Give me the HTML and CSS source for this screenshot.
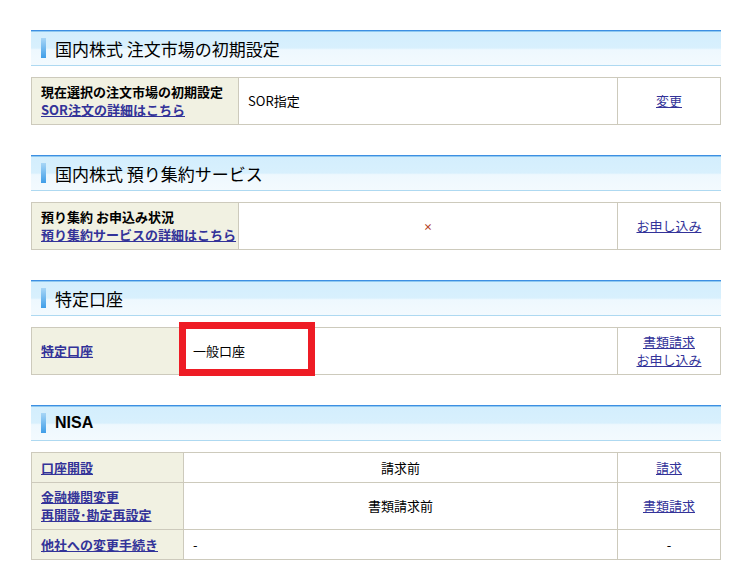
FILE: index.html
```html
<!DOCTYPE html>
<html lang="ja">
<head>
  <meta charset="UTF-8">
  <title>口座設定</title>
  <link rel="stylesheet" href="styles.css">
</head>
<body>
  <div class="wrap">

    <!-- 注文市場 -->
    <div class="section">
      <h2 class="sec-title"><span class="bar"></span>国内株式 注文市場の初期設定</h2>
      <table class="grid">
        <colgroup><col class="c-wide"><col><col class="c-act"></colgroup>
        <tr>
          <th>現在選択の注文市場の初期設定<br><a href="#">SOR注文の詳細はこちら</a></th>
          <td>SOR指定</td>
          <td class="act"><a href="#">変更</a></td>
        </tr>
      </table>
    </div>

    <!-- 預り集約 -->
    <div class="section">
      <h2 class="sec-title"><span class="bar"></span>国内株式 預り集約サービス</h2>
      <table class="grid">
        <colgroup><col class="c-wide"><col><col class="c-act"></colgroup>
        <tr>
          <th>預り集約 お申込み状況<br><a href="#">預り集約サービスの詳細はこちら</a></th>
          <td class="center"><span class="cross">×</span></td>
          <td class="act"><a href="#">お申し込み</a></td>
        </tr>
      </table>
    </div>

    <!-- 特定口座 -->
    <div class="section">
      <h2 class="sec-title"><span class="bar"></span>特定口座</h2>
      <div class="marked">
        <table class="grid">
          <colgroup><col class="c-narrow"><col><col class="c-act"></colgroup>
          <tr>
            <th><a href="#">特定口座</a></th>
            <td>一般口座</td>
            <td class="act"><a href="#">書類請求</a><br><a href="#">お申し込み</a></td>
          </tr>
        </table>
        <div class="highlight"></div>
      </div>
    </div>

    <!-- NISA -->
    <div class="section">
      <h2 class="sec-title latin"><span class="bar"></span>NISA</h2>
      <table class="grid">
        <colgroup><col class="c-narrow"><col><col class="c-act"></colgroup>
        <tr class="one">
          <th><a href="#">口座開設</a></th>
          <td class="center">請求前</td>
          <td class="act"><a href="#">請求</a></td>
        </tr>
        <tr>
          <th><a href="#">金融機関変更</a><br><a href="#">再開設･勘定再設定</a></th>
          <td class="center">書類請求前</td>
          <td class="act"><a href="#">書類請求</a></td>
        </tr>
        <tr class="one">
          <th><a href="#">他社への変更手続き</a></th>
          <td>-</td>
          <td class="act">-</td>
        </tr>
      </table>
    </div>

  </div>
</body>
</html>
```

FILE: styles.css
```css
body {
  margin: 0;
  background: #fff;
  font-family: "Noto Sans CJK JP", "Liberation Sans", sans-serif;
  font-size: 13px;
  color: #000;
}

.wrap {
  width: 690px;
  padding: 30px 0 0 31px;
}

.section {
  margin-bottom: 30px;
}

.sec-title {
  display: flex;
  align-items: center;
  height: 34px;
  margin: 0 0 11px;
  padding-left: 10px;
  font-size: 17px;
  font-weight: normal;
  color: #000;
  border-top: 1px solid #3d8fe2;
  border-bottom: 1px solid #aed9f1;
  box-shadow: inset 0 1px 0 #8fc9f1;
  background: linear-gradient(#d3eefd 0%, #d8f0fd 50%, #eef8fe 55%, #f3fafe 100%);
}

.sec-title.latin {
  font-family: "Liberation Sans", sans-serif;
  font-size: 16px;
  font-weight: bold;
}

.bar {
  display: inline-block;
  width: 5px;
  height: 20px;
  margin-right: 9px;
  background: linear-gradient(#a8d6f6, #3f9ee8);
}

.grid {
  width: 690px;
  border-collapse: collapse;
  table-layout: fixed;
}

.c-wide { width: 207px; }
.c-narrow { width: 152px; }
.c-act { width: 103px; }

.grid th,
.grid td {
  border: 1px solid #cdcabc;
  padding: 5px 9px;
  line-height: 18px;
  text-align: left;
  vertical-align: middle;
  font-weight: normal;
}

.grid .one th,
.grid .one td {
  padding-top: 6px;
}

.grid th {
  padding-right: 2px;
  background: #f1f1e2;
  font-weight: bold;
  white-space: nowrap;
}

.grid td.center,
.grid td.act {
  text-align: center;
}

.grid a {
  color: #333399;
}

.cross {
  font-size: 9px;
  font-weight: bold;
  color: #b5432a;
}

.marked {
  position: relative;
}

.highlight {
  position: absolute;
  left: 148px;
  top: -5px;
  width: 136px;
  height: 54px;
  box-sizing: border-box;
  border: 7px solid #ee1c25;
}
```
